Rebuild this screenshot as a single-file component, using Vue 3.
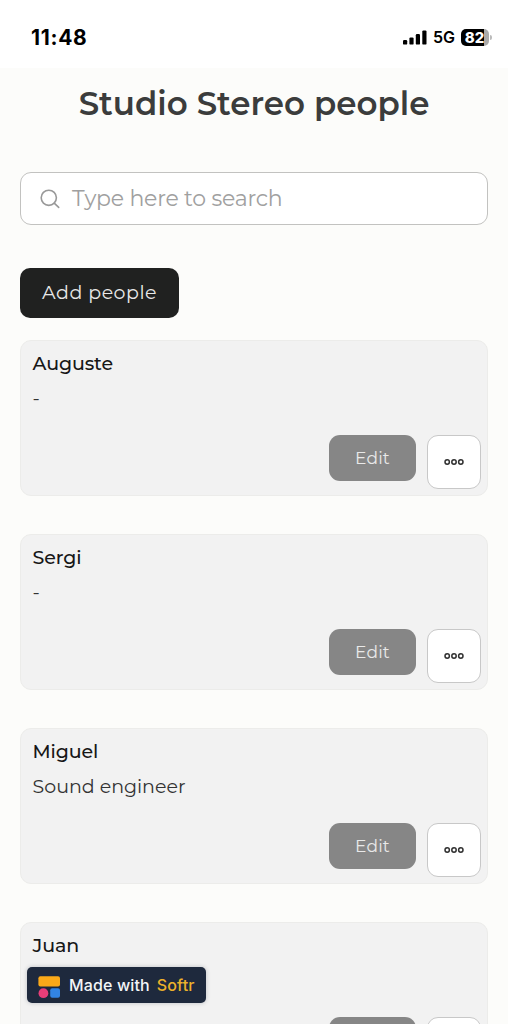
<script setup>
const people = [
  { name: 'Auguste', role: '-', key: 'auguste' },
  { name: 'Sergi', role: '-', key: 'sergi' },
  { name: 'Miguel', role: 'Sound engineer', key: 'miguel' },
  { name: 'Juan', role: '', key: 'juan' },
]
</script>

<template>
  <div class="screen">
    <header class="status">
      <span class="time">11:48</span>
      <div class="indicators">
        <svg class="signal" width="24" height="15" viewBox="0 0 24 15">
          <rect x="0" y="10" width="4.2" height="4.6" rx="1.2" />
          <rect x="6.4" y="7.4" width="4.2" height="7.2" rx="1.2" />
          <rect x="12.8" y="4" width="4.2" height="10.6" rx="1.2" />
          <rect x="19.3" y="0.4" width="4.2" height="14.2" rx="1.2" />
        </svg>
        <span class="network">5G</span>
        <div class="battery"><span>82</span></div>
        <i class="cap"></i>
      </div>
    </header>

    <main class="page">
      <h1>Studio Stereo people</h1>

      <div class="search">
        <svg width="20" height="20" viewBox="0 0 20 20">
          <circle cx="8.8" cy="8.8" r="7.6" />
          <path d="M14.2 14.2 18.7 18.4" />
        </svg>
        <span class="hint">Type here to search</span>
      </div>

      <button class="add">Add people</button>

      <section class="list">
        <article v-for="person in people" :key="person.key" class="card">
          <h2>{{ person.name }}</h2>
          <p>{{ person.role }}</p>
          <div class="actions">
            <button class="edit">Edit</button>
            <button class="more">
              <svg width="20" height="8" viewBox="0 0 20 8">
                <circle cx="3.2" cy="4" r="2.2" />
                <circle cx="10" cy="4" r="2.2" />
                <circle cx="16.8" cy="4" r="2.2" />
              </svg>
            </button>
          </div>
        </article>
      </section>
    </main>

    <div class="badge">
      <svg width="23" height="23" viewBox="0 0 23 23">
        <rect x="0.4" y="0.3" width="21.6" height="10.2" rx="2" fill="#fba919" />
        <circle cx="5.4" cy="17.2" r="4.9" fill="#e83e78" />
        <rect x="12.2" y="12.2" width="9.8" height="9.6" rx="2" fill="#3284e4" />
      </svg>
      <span class="made">Made with</span>
      <span class="softr">Softr</span>
    </div>
  </div>
</template>

<style>
body {
  overflow: hidden;
}
</style>

<style scoped>
.screen {
  position: relative;
  box-sizing: border-box;
  width: 508px;
  height: 1024px;
  overflow: hidden;
  background: #fcfcfa;
  font-family: Montserrat, Inter, "Liberation Sans", sans-serif;
}

.status {
  display: flex;
  align-items: center;
  justify-content: space-between;
  box-sizing: border-box;
  height: 68px;
  padding: 6px 16px 0 31px;
  background: #fff;
  color: #000;
  font-family: Inter, sans-serif;
}

.time {
  font-size: 21px;
  font-weight: 750;
  letter-spacing: 0.7px;
}

.indicators {
  display: flex;
  align-items: center;
}

.network {
  margin: 0 6px 0 6px;
  font-size: 16px;
  font-weight: 600;
}

.battery {
  display: flex;
  align-items: center;
  justify-content: center;
  width: 28px;
  height: 17px;
  border-radius: 5px;
  background: linear-gradient(90deg, #000 23px, #ababab 23px);
  color: #fff;
  font-size: 15px;
  font-weight: 800;
  line-height: 17px;
}

.battery span {
  margin-right: 1px;
}

.cap {
  width: 2px;
  height: 5px;
  margin-left: 1px;
  border-radius: 0 2px 2px 0;
  background: #bbb;
}

.page {
  display: flex;
  flex-direction: column;
  align-items: flex-start;
  padding: 0 20px;
}

h1 {
  align-self: stretch;
  margin: 16px 0 0;
  color: #3b3c3c;
  font-size: 32.5px;
  font-weight: 600;
  line-height: 40px;
  text-align: center;
  white-space: nowrap;
}

.search {
  display: flex;
  align-items: center;
  align-self: stretch;
  gap: 12px;
  box-sizing: border-box;
  height: 53px;
  margin-top: 48px;
  padding: 0 19px;
  border: 1.5px solid #c2c2c0;
  border-radius: 11px;
  background: #fff;
  color: #a0a0a0;
  font-size: 22px;
  letter-spacing: -0.22px;
  white-space: nowrap;
}

.search svg {
  fill: none;
  stroke: #999;
  stroke-width: 1.6;
  stroke-linecap: round;
}

button {
  display: flex;
  align-items: center;
  justify-content: center;
  box-sizing: border-box;
  margin: 0;
  padding: 0;
  border: 0;
  font-family: inherit;
  white-space: nowrap;
}

.add {
  width: 159px;
  height: 50px;
  margin-top: 43px;
  padding-bottom: 2px;
  border-radius: 10px;
  background: #202120;
  color: #e8e8e8;
  font-size: 19px;
  letter-spacing: 0.5px;
}

.list {
  display: flex;
  flex-direction: column;
  align-self: stretch;
  gap: 38px;
  margin-top: 22px;
}

.card {
  display: flex;
  flex-direction: column;
  box-sizing: border-box;
  height: 156px;
  padding: 10.6px 6px 6px 11.6px;
  border: 1px solid #ececea;
  border-radius: 11px;
  background: #f2f2f2;
}

h2 {
  margin: 0;
  color: #171717;
  font-size: 19px;
  font-weight: 500;
  line-height: 24px;
  letter-spacing: -0.12px;
}

p {
  height: 24px;
  margin: 11px 0 0;
  color: #333;
  font-size: 19px;
  line-height: 24px;
}

.actions {
  display: flex;
  align-items: flex-start;
  justify-content: flex-end;
  gap: 11px;
  margin-top: auto;
}

.edit {
  width: 87px;
  height: 46px;
  border-radius: 11px;
  background: #868686;
  color: #e9e9e9;
  font-size: 17px;
  letter-spacing: 0.2px;
}

.more {
  width: 54px;
  height: 54px;
  border: 1.5px solid #c8c8c8;
  border-radius: 11px;
  background: #fff;
}

.more svg {
  fill: none;
  stroke: #303030;
  stroke-width: 1.5;
}

.badge {
  position: absolute;
  left: 27px;
  top: 967px;
  display: flex;
  align-items: center;
  box-sizing: border-box;
  width: 179px;
  height: 36px;
  padding: 0 0 0 11px;
  border-radius: 5px;
  background: #1e293d;
  box-shadow: 0 0 4px rgba(30, 41, 61, 0.25);
  color: #f3f5f8;
  font-family: Inter, sans-serif;
  font-size: 16px;
  font-weight: 500;
  letter-spacing: 0.13px;
  white-space: nowrap;
}

.badge svg {
  margin-top: 5px;
}

.made {
  margin-left: 8px;
}

.softr {
  margin-left: 7px;
  color: #edb22b;
}
</style>
